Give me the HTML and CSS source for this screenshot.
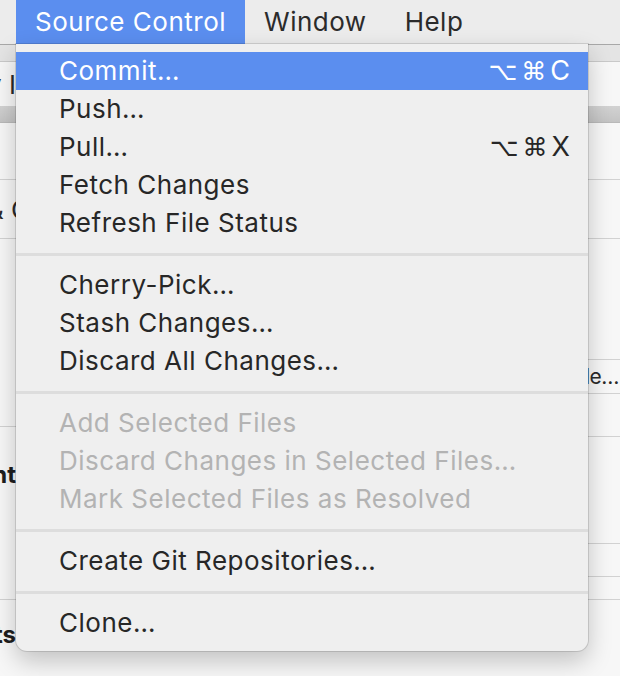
FILE: index.html
```html
<!DOCTYPE html>
<html>
<head>
<meta charset="utf-8">
<link rel="stylesheet" href="styles.css">
</head>
<body>
<div class="screen">
  <div class="menubar">
    <span class="mb-item active">Source Control</span>
    <span class="mb-item">Window</span>
    <span class="mb-item">Help</span>
  </div>
  <div class="window">
    <div class="pane left">
      <div class="row band h16"></div>
      <div class="row h44"><span class="peek">Sort by I</span></div>
      <div class="row header h16"></div>
      <div class="row line h56"></div>
      <div class="row line h58"><span class="peek amp">Staged &amp; C</span></div>
      <div class="row line h187"></div>
      <div class="row line h172 top"><span class="peek bold">Comment</span></div>
      <div class="row h77 top2"><span class="peek bold">Commits</span></div>
    </div>
    <div class="pane right">
      <div class="row band h16"></div>
      <div class="row h44"></div>
      <div class="row header h16"></div>
      <div class="row line h56"></div>
      <div class="row line h58"></div>
      <div class="row line h120"></div>
      <div class="row line h33 end"><span class="tail">Handle…</span></div>
      <div class="row line h42"></div>
      <div class="row line h106"></div>
      <div class="row line h32"></div>
      <div class="row line h22"></div>
      <div class="row h77"></div>
    </div>
  </div>

  <div class="menu">
    <div class="item selected"><span>Commit…</span><span class="key">⌥⌘<b>C</b></span></div>
    <div class="item"><span>Push…</span></div>
    <div class="item"><span>Pull…</span><span class="key">⌥⌘<b>X</b></span></div>
    <div class="item"><span>Fetch Changes</span></div>
    <div class="item"><span>Refresh File Status</span></div>
    <div class="sep"></div>
    <div class="item"><span>Cherry-Pick…</span></div>
    <div class="item"><span>Stash Changes…</span></div>
    <div class="item"><span>Discard All Changes…</span></div>
    <div class="sep"></div>
    <div class="item disabled"><span>Add Selected Files</span></div>
    <div class="item disabled"><span>Discard Changes in Selected Files…</span></div>
    <div class="item disabled"><span>Mark Selected Files as Resolved</span></div>
    <div class="sep"></div>
    <div class="item"><span>Create Git Repositories…</span></div>
    <div class="sep"></div>
    <div class="item"><span>Clone…</span></div>
  </div>
</div>
</body>
</html>
```

FILE: styles.css
```css
* { box-sizing: border-box; margin: 0; padding: 0; }
html, body { width: 620px; height: 676px; overflow: hidden; }
body {
  font-family: Inter, "Noto Sans", "DejaVu Sans", sans-serif;
  background: #f6f6f6;
  color: #262626;
}
.screen {
  position: relative;
  width: 620px;
  height: 676px;
  overflow: hidden;
}
.menubar {
  height: 45px;
  display: flex;
  align-items: stretch;
  padding-left: 16px;
  background: #ececec;
  border-bottom: 1px solid #a8a8a8;
  font-size: 26px;
  letter-spacing: 0.5px;
}
.mb-item {
  display: flex;
  align-items: center;
  padding: 0 19px 1px;
  color: #2b2b2b;
}
.mb-item.active {
  background: #5b8eef;
  color: #fff;
}
.window {
  display: flex;
  height: 631px;
}
.pane { flex: 1; display: flex; flex-direction: column; overflow: hidden; }
.row {
  flex: none;
  display: flex;
  align-items: center;
  white-space: nowrap;
  font-size: 26px;
  color: #2a2a2a;
  background: #f7f7f7;
}
.row.line { border-bottom: 1px solid #d2d2d2; }
.band { background: #e4e4e4; border-bottom: 1px solid #c9c9c9; }
.header { background: linear-gradient(#d2d2d2, #c4c4c4); border-bottom: 1px solid #b9b9b9; }
.row.top { align-items: flex-start; padding-top: 33px; }
.row.top2 { align-items: flex-start; padding-top: 20px; }
.row.end { justify-content: flex-end; }
.h16 { height: 17px; }
.h44 { height: 44px; }
.h56 { height: 57px; }
.h58 { height: 59px; }
.h187 { height: 188px; }
.h172 { height: 173px; }
.h77 { height: 80px; }
.h120 { height: 121px; }
.h33 { height: 34px; }
.h42 { height: 43px; }
.h106 { height: 107px; }
.h32 { height: 33px; }
.h22 { height: 23px; }
.left .row { justify-content: flex-end; }
.left .peek { margin-right: calc(100% - 16px); }
.left .peek.amp { margin-right: calc(100% - 30px); }
.bold { font-weight: 700; font-size: 24px; color: #1e1e1e; }
.tail { padding-right: 1px; font-size: 21px; letter-spacing: -0.5px; }

.menu {
  position: absolute;
  left: 16px;
  top: 44px;
  width: 572px;
  padding: 8px 0 9px;
  background: #efefef;
  border-radius: 0 0 11px 11px;
  box-shadow: 0 0 0 1px rgba(0,0,0,0.12), 0 10px 24px rgba(0,0,0,0.22);
  font-size: 26px;
  letter-spacing: 0.5px;
}
.item {
  height: 38px;
  display: flex;
  align-items: center;
  justify-content: space-between;
  padding: 0 18px 1px 43px;
  color: #272727;
}
.item.selected { background: #5b8eef; color: #fff; }
.item.disabled { color: #b3b3b3; }
.key {
  font-family: "DejaVu Sans", sans-serif;
  font-size: 25px;
  letter-spacing: 4px;
}
.key b {
  font-family: Inter, sans-serif;
  font-weight: 400;
  font-size: 27px;
  letter-spacing: 0;
}
.sep {
  height: 24px;
  display: flex;
  align-items: center;
}
.sep::before {
  content: "";
  display: block;
  width: 100%;
  height: 3px;
  background: #dddddd;
}
```
